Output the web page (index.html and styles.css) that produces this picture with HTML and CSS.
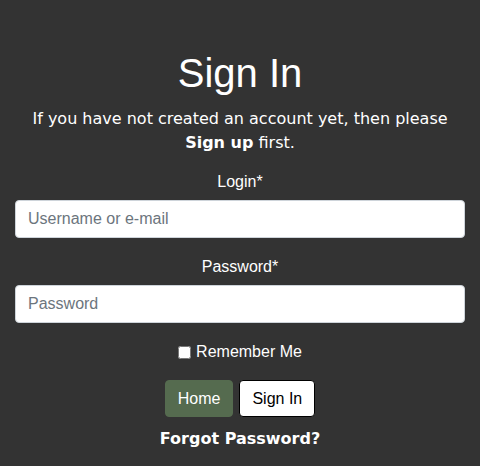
FILE: index.html
```html
<!DOCTYPE html>
<html>
<head>
<meta charset="utf-8">
<link rel="stylesheet" href="styles.css">
</head>
<body>
<main class="signin">
  <h1 class="title">Sign In</h1>
  <p class="intro">If you have not created an account yet, then please <b>Sign up</b> first.</p>
  <form class="form">
    <label class="label" for="login">Login*</label>
    <input class="field" id="login" type="text" placeholder="Username or e-mail">
    <label class="label" for="password">Password*</label>
    <input class="field" id="password" type="password" placeholder="Password">
    <label class="remember"><input type="checkbox" class="check"> Remember Me</label>
    <div class="buttons">
      <button type="button" class="btn btn-home">Home</button>
      <button type="button" class="btn btn-signin">Sign In</button>
    </div>
    <a class="forgot">Forgot Password?</a>
  </form>
</main>
</body>
</html>
```
FILE: styles.css
```css
html, body {
  margin: 0;
  padding: 0;
  background: #333333;
  height: 100%;
}
body {
  font-family: "Liberation Sans", Arial, sans-serif;
  color: #ffffff;
}
.signin {
  padding: 49px 15px 0;
  text-align: center;
}
.title {
  font-size: 40px;
  font-weight: 400;
  line-height: 48px;
  margin: 0 0 10px;
}
.intro {
  font-family: "DejaVu Sans", Verdana, sans-serif;
  font-size: 16px;
  line-height: 24px;
  margin: 0 0 15px;
}
.intro b { font-weight: 700; }
.form {
  display: flex;
  flex-direction: column;
  align-items: center;
}
.label {
  font-size: 16px;
  line-height: 24px;
  margin-bottom: 6px;
}
.field {
  box-sizing: border-box;
  width: 100%;
  height: 38px;
  padding: 6px 12px;
  font-family: "Liberation Sans", Arial, sans-serif;
  font-size: 16px;
  color: #495057;
  background: #fff;
  border: 1px solid #ced4da;
  border-radius: 4px;
  margin-bottom: 17px;
}
.field::placeholder { color: #6c757d; }
.remember {
  display: flex;
  align-items: center;
  gap: 5px;
  font-size: 16px;
  line-height: 24px;
  margin-bottom: 16px;
}
.check {
  width: 13px;
  height: 13px;
  margin: 0;
}
.buttons {
  display: flex;
  gap: 6px;
  margin-bottom: 12px;
}
.btn {
  font-family: "Liberation Sans", Arial, sans-serif;
  font-size: 16px;
  height: 37px;
  padding: 6px 12px;
  border-radius: 4px;
  border: 1px solid transparent;
}
.btn-home {
  background: #556b4f;
  color: #fff;
  border-color: #556b4f;
}
.btn-signin {
  background: #fff;
  color: #000;
  border-color: #000;
}
.forgot {
  font-family: "DejaVu Sans", Verdana, sans-serif;
  font-weight: 700;
  font-size: 16px;
  line-height: 20px;
  color: #fff;
}
```
